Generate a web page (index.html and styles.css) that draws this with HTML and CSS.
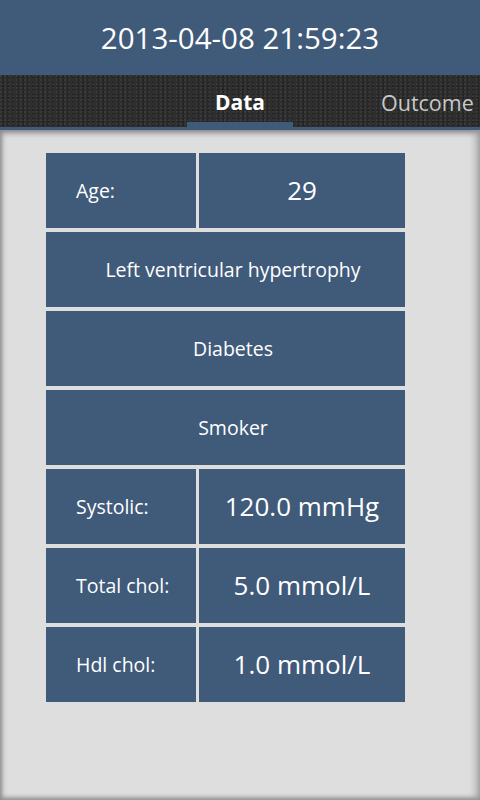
FILE: index.html
```html
<!DOCTYPE html>
<html>
<head>
<meta charset="utf-8">
<link rel="stylesheet" href="styles.css">
</head>
<body>
<div class="app">
  <header class="title">2013-04-08 21:59:23</header>
  <nav class="tabs">
    <div class="tab active">Data</div>
    <div class="tab next">Outcome</div>
  </nav>
  <main class="panel">
    <div class="table">
      <div class="row split"><div class="cell label">Age:</div><div class="cell value">29</div></div>
      <div class="row"><div class="cell full">Left ventricular hypertrophy</div></div>
      <div class="row"><div class="cell full">Diabetes</div></div>
      <div class="row"><div class="cell full">Smoker</div></div>
      <div class="row split"><div class="cell label">Systolic:</div><div class="cell value">120.0 mmHg</div></div>
      <div class="row split"><div class="cell label">Total chol:</div><div class="cell value">5.0 mmol/L</div></div>
      <div class="row split"><div class="cell label">Hdl chol:</div><div class="cell value">1.0 mmol/L</div></div>
    </div>
  </main>
</div>
</body>
</html>
```
FILE: styles.css
```css
* { box-sizing: border-box; }
html, body { margin: 0; padding: 0; }
body {
  width: 480px;
  height: 800px;
  overflow: hidden;
  font-family: "Open Sans", "DejaVu Sans", sans-serif;
  background: #dddddd;
}
.app {
  display: flex;
  flex-direction: column;
  height: 800px;
}
.title {
  height: 75px;
  background: #405a7a;
  color: #ffffff;
  font-size: 29.5px;
  display: flex;
  align-items: center;
  justify-content: center;
  padding-bottom: 1px;
}
.tabs {
  height: 55px;
  background-color: #2e2e2e;
  background-image:
    radial-gradient(circle at 1px 1px, rgba(255,255,255,0.06) 1px, transparent 1.5px),
    radial-gradient(circle at 3px 2px, rgba(0,0,0,0.25) 1px, transparent 1.5px);
  background-size: 4px 4px, 5px 3px;
  border-bottom: 3px solid #405a7a;
  display: flex;
  align-items: stretch;
  padding-left: 187px;
  white-space: nowrap;
}
.tab {
  font-size: 21px;
  display: flex;
  align-items: center;
  justify-content: center;
}
.tab.active {
  width: 106px;
  color: #ffffff;
  font-weight: bold;
  border-bottom: 5px solid #405a7a;
  padding-top: 7px;
}
.tab.next {
  margin-left: 88px;
  color: #c8c8c8;
  padding-top: 3px;
  font-size: 21.5px;
}
.panel {
  flex: 1;
  background: #dedede;
  box-shadow:
    inset 4px 0 5px -2px #8c8c8c,
    inset -6px 0 8px -3px #9a9a9a,
    inset 0 -4px 5px -2px #8c8c8c,
    inset 0 6px 6px -4px #777777;
  padding: 23px 0 0 46px;
}
.table {
  width: 359px;
  display: flex;
  flex-direction: column;
  gap: 4px;
}
.row {
  height: 75px;
  display: flex;
  gap: 3px;
}
.cell {
  background: #405a7a;
  color: #ffffff;
  display: flex;
  align-items: center;
}
.label {
  width: 150px;
  padding-left: 30px;
  font-size: 19.5px;
}
.value {
  flex: 1;
  justify-content: center;
  font-size: 26px;
  padding-bottom: 2px;
}
.full {
  flex: 1;
  justify-content: center;
  padding-left: 15px;
  font-size: 19.5px;
}
```
